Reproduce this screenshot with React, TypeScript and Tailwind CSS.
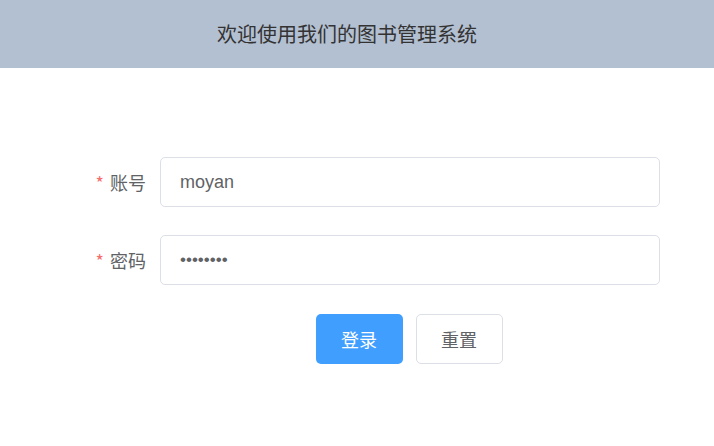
import React, { useState } from 'react';

function FormRow({ label, children }: { label: string; children: React.ReactNode }) {
  return (
    <div className="flex items-center mb-7">
      <label className="w-20 pr-[14px] flex justify-end items-center text-[18px] text-[#606266]">
        <span className="text-[#f56c6c] mr-[6px]">*</span>
        {label}
      </label>
      {children}
    </div>
  );
}

export default function App() {
  const [user, setUser] = useState('moyan');
  const [pwd, setPwd] = useState('12345678');

  return (
    <div className="w-[714px] h-[446px] bg-white font-['Microsoft_YaHei','Noto_Sans_CJK_SC',sans-serif]">
      <div className="h-[68px] bg-[#b3c0d1] flex items-center justify-center pr-5 text-[20px] text-[#333]">
        欢迎使用我们的图书管理系统
      </div>

      <div className="pt-[89px] pl-20 w-[660px]">
        <FormRow label="账号">
          <input
            value={user}
            onChange={(e) => setUser(e.target.value)}
            className="flex-1 h-[50px] pl-[19px] pr-5 border border-[#dcdfe6] rounded-[5px] text-[18px] text-[#606266] outline-none font-['Liberation_Sans',sans-serif]"
          />
        </FormRow>
        <FormRow label="密码">
          <input
            type="password"
            value={pwd}
            onChange={(e) => setPwd(e.target.value)}
            className="flex-1 h-[50px] pl-[19px] pr-5 border border-[#dcdfe6] rounded-[5px] text-[17px] text-[#606266] outline-none font-['Liberation_Sans',sans-serif]"
          />
        </FormRow>
        <div className="flex pl-[78px] justify-center gap-[13px] mt-[29px]">
          <button className="w-[87px] h-[50px] rounded-[5px] bg-[#409eff] text-white text-[18px]">
            登录
          </button>
          <button className="w-[87px] h-[50px] rounded-[5px] bg-white border border-[#dcdfe6] text-[#606266] text-[18px]">
            重置
          </button>
        </div>
      </div>
    </div>
  );
}
